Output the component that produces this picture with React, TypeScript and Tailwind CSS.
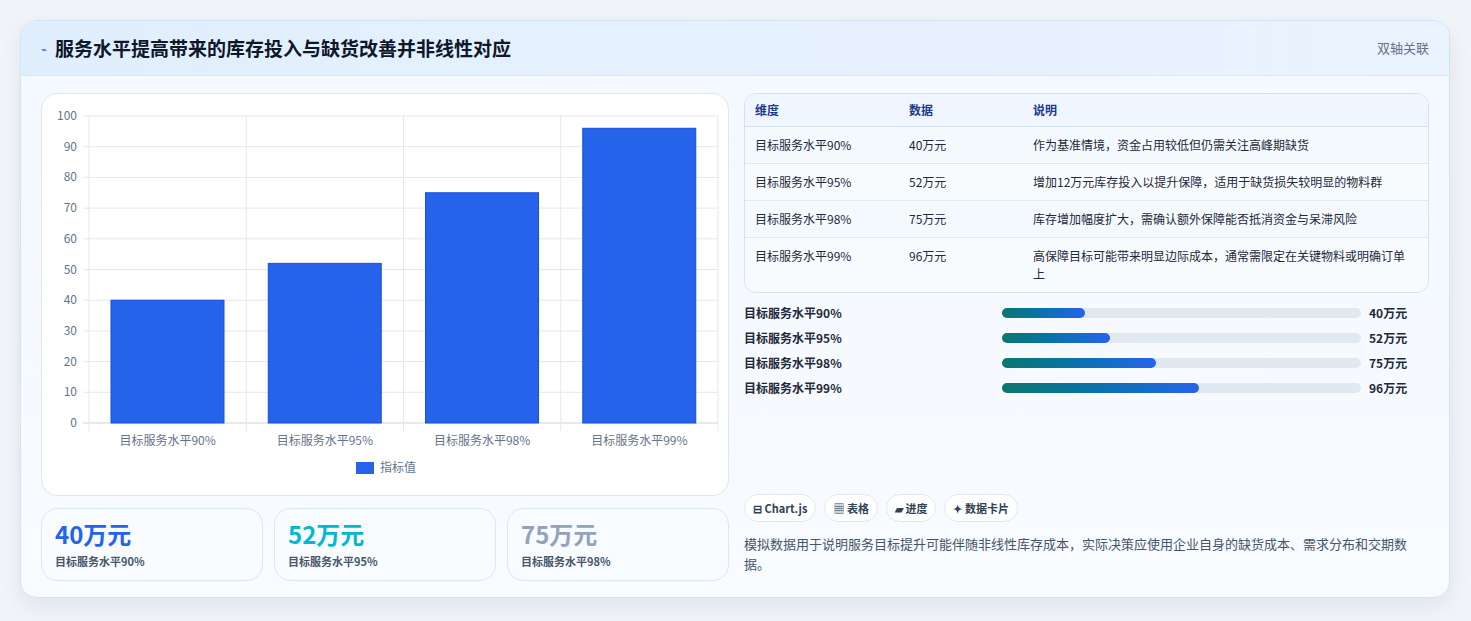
import React from "react";

const rows = [
  { name: "目标服务水平90%", value: 40, note: "作为基准情境，资金占用较低但仍需关注高峰期缺货", pct: 23 },
  { name: "目标服务水平95%", value: 52, note: "增加12万元库存投入以提升保障，适用于缺货损失较明显的物料群", pct: 30 },
  { name: "目标服务水平98%", value: 75, note: "库存增加幅度扩大，需确认额外保障能否抵消资金与呆滞风险", pct: 43 },
  { name: "目标服务水平99%", value: 96, note: "高保障目标可能带来明显边际成本，通常需限定在关键物料或明确订单上", pct: 55 },
];

const BarChart = () => {
  // plot area in card coords
  const x0 = 47, x1 = 676, yTop = 22, yBot = 329;
  const h = yBot - yTop;
  const cw = (x1 - x0) / 4;
  return (
    <svg width="688" height="403" className="block">
      {[0, 10, 20, 30, 40, 50, 60, 70, 80, 90, 100].map((t) => {
        const y = yBot - (t / 100) * h;
        return (
          <g key={t}>
            <line x1={x0 - 6} x2={x1} y1={y} y2={y} stroke={t === 0 ? "#cbd5e1" : "#e5e7eb"} />
            <text x={x0 - 12} y={y + 4} textAnchor="end" fontSize="12" fill="#64748b">{t}</text>
          </g>
        );
      })}
      {[0, 1, 2, 3, 4].map((i) => (
        <line key={i} x1={x0 + i * cw} x2={x0 + i * cw} y1={yTop} y2={yBot + 8} stroke="#e5e7eb" />
      ))}
      {rows.map((r, i) => {
        const bh = (r.value / 100) * h;
        return (
          <g key={r.name}>
            <rect x={x0 + i * cw + 22} y={yBot - bh} width={113} height={bh} fill="#2563eb" stroke="#1d4ed8" strokeWidth="1" />
            <text x={x0 + i * cw + cw / 2} y={yBot + 22} textAnchor="middle" fontSize="12" fill="#64748b">{r.name}</text>
          </g>
        );
      })}
      <rect x={314} y={368} width={18} height={12} fill="#2563eb" />
      <text x={338} y={378} fontSize="12" fill="#64748b">指标值</text>
    </svg>
  );
};

export default function App() {
  return (
    <div className="w-[1471px] h-[621px] bg-[#f1f5f9] pt-5 px-5" style={{ fontFamily: '"Noto Sans CJK SC", "Noto Sans", sans-serif' }}>
      <div className="w-[1430px] h-[578px] rounded-2xl border border-[#cfe5f5] bg-gradient-to-b from-[#f3f9ff] to-[#f8fbff] shadow-[0_8px_24px_rgba(15,23,42,0.08)] overflow-hidden">
        <div className="h-[55px] flex items-center justify-between px-5 bg-gradient-to-r from-[#e0effd] to-[#eaf2fd] border-b border-[#d6e8f8]">
          <div className="flex items-center gap-2">
            <span className="text-[10px] text-[#2563eb]">⌁</span>
            <span className="text-[19px] font-bold text-[#0f172a]">服务水平提高带来的库存投入与缺货改善并非线性对应</span>
          </div>
          <span className="text-[13px] text-[#64748b]">双轴关联</span>
        </div>
        <div className="flex gap-[15px] px-5 pt-[17px]">
          <div className="w-[688px] flex flex-col gap-3">
            <div className="h-[403px] rounded-2xl border border-[#dbe7f3] bg-white">
              <BarChart />
            </div>
            <div className="grid grid-cols-3 gap-[11px]">
              {[
                { v: "40万元", l: "目标服务水平90%", c: "text-[#2563eb]" },
                { v: "52万元", l: "目标服务水平95%", c: "text-[#06b6d4]" },
                { v: "75万元", l: "目标服务水平98%", c: "text-[#94a3b8]" },
              ].map((k) => (
                <div key={k.l} className="h-[73px] rounded-2xl border border-[#dbe7f3] bg-[#f8fbff] px-[13px] pt-[10px]">
                  <div className={`text-[24px] leading-[30px] font-bold ${k.c}`}>{k.v}</div>
                  <div className="text-[11px] font-semibold text-[#475569] mt-1">{k.l}</div>
                </div>
              ))}
            </div>
          </div>
          <div className="w-[688px] flex flex-col">
            <div className="rounded-xl border border-[#d3e2f0] bg-[#f8fbff] overflow-hidden text-[12px]">
              <div className="flex h-[33px] items-center bg-[#eff6ff] border-b border-[#d3e2f0] font-bold text-[#1e3a8a]">
                <div className="w-[164px] pl-[10px]">维度</div>
                <div className="w-[124px]">数据</div>
                <div className="flex-1">说明</div>
              </div>
              {rows.map((r, i) => (
                <div key={r.name} className={`flex py-[9px] text-[#1e293b] ${i < 3 ? "border-b border-[#e2e8f0]" : ""} ${i % 2 === 0 ? "bg-[#f4f9fe]" : "bg-[#f8fbfe]"}`}>
                  <div className="w-[164px] pl-[10px] leading-[17px]">{r.name}</div>
                  <div className="w-[124px] leading-[17px]">{r.value}万元</div>
                  <div className="flex-1 pr-3 leading-[18px]">{r.note}</div>
                </div>
              ))}
            </div>
            <div className="flex flex-col gap-[7px] mt-[11px]">
              {rows.map((r) => (
                <div key={r.name} className="flex items-center h-[18px] text-[12px] font-bold text-[#1e293b]">
                  <div className="w-[258px]">{r.name}</div>
                  <div className="w-[359px] h-[10px] rounded-full bg-[#e2e8f0]">
                    <div className="h-full rounded-full bg-gradient-to-r from-[#0f766e] to-[#2563eb]" style={{ width: `${r.pct}%` }} />
                  </div>
                  <div className="ml-2">{r.value}万元</div>
                </div>
              ))}
            </div>
            <div className="flex gap-2 mt-auto text-[11px] font-semibold text-[#334155]">
              {["⊟ Chart.js", "▦ 表格", "▰ 进度", "✦ 数据卡片"].map((t) => (
                <span key={t} className="h-[28px] px-[8px] flex items-center rounded-full border border-[#e2e8f0] bg-white">{t}</span>
              ))}
            </div>
            <div className="mt-[12px] mb-[8px] text-[13px] text-[#475569]">模拟数据用于说明服务目标提升可能伴随非线性库存成本，实际决策应使用企业自身的缺货成本、需求分布和交期数据。</div>
          </div>
        </div>
      </div>
    </div>
  );
}
